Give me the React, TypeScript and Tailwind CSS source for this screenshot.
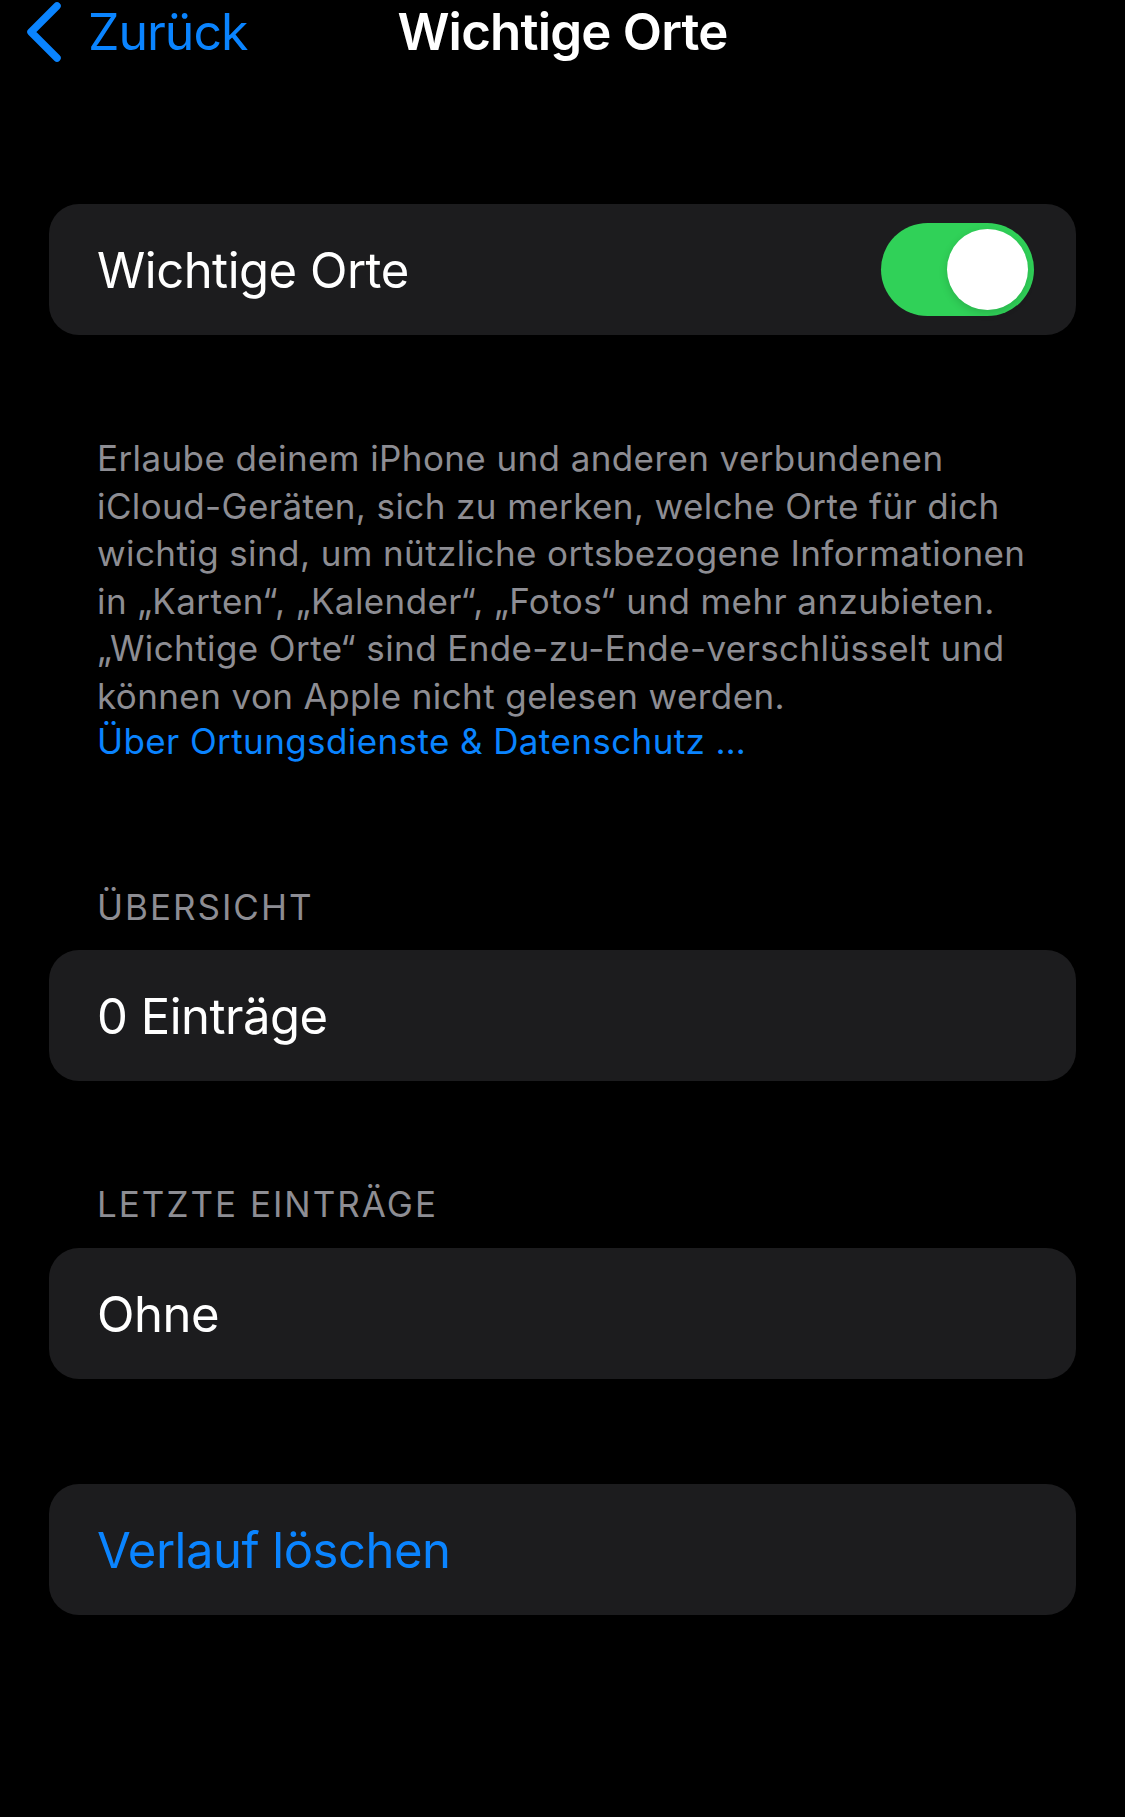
import { useState } from "react";

const font = { fontFamily: "Inter, 'Noto Sans', sans-serif" };

function Toggle({ on, onChange }: { on: boolean; onChange: (v: boolean) => void }) {
  return (
    <button
      onClick={() => onChange(!on)}
      className={`relative flex h-[93px] w-[153px] shrink-0 items-center rounded-full px-[6px] ${on ? "justify-end bg-[#30d158]" : "justify-start bg-[#39393d]"}`}
      aria-label="Wichtige Orte"
    >
      <span className="block h-[81px] w-[81px] rounded-full bg-white shadow-[0_3px_8px_rgba(0,0,0,0.15)]" />
    </button>
  );
}

function Card({ children }: { children: React.ReactNode }) {
  return (
    <div className="mx-[49px] flex h-[131px] items-center justify-between rounded-[30px] bg-[#1c1c1e] pl-[48px] pr-[42px]">
      {children}
    </div>
  );
}

export default function App() {
  const [on, setOn] = useState(true);

  const lines = [
    "Erlaube deinem iPhone und anderen verbundenen",
    "iCloud-Geräten, sich zu merken, welche Orte für dich",
    "wichtig sind, um nützliche ortsbezogene Informationen",
    "in „Karten“, „Kalender“, „Fotos“ und mehr anzubieten.",
    "„Wichtige Orte“ sind Ende-zu-Ende-verschlüsselt und",
    "können von Apple nicht gelesen werden.",
  ];

  return (
    <div className="min-h-[1817px] w-full bg-black text-white" style={font}>
      {/* Nav bar */}
      <div className="grid h-[63px] grid-cols-[1fr_auto_1fr] items-center">
        <button className="flex items-center pl-[25px] text-[#0a84ff]">
          <svg width="38" height="60" viewBox="0 0 38 60" fill="none">
            <path d="M32 4 L6 30 L32 56" stroke="currentColor" strokeWidth="7.5" strokeLinecap="round" strokeLinejoin="round" />
          </svg>
          <span className="ml-[25px] text-[50px] leading-none tracking-[-1px]">Zurück</span>
        </button>
        <div className="text-[51px] font-semibold leading-none tracking-[-0.8px]">Wichtige Orte</div>
        <div />
      </div>

      <div className="mt-[141px]">
        <Card>
          <span className="pt-[3px] text-[49px] tracking-[-0.5px]">Wichtige Orte</span>
          <Toggle on={on} onChange={setOn} />
        </Card>
      </div>

      {/* Footer text */}
      <div className="mt-[100px] px-[97px] text-[35px] tracking-[0.4px] text-[#8d8d93]">
        {lines.map((l) => (
          <div key={l} className="whitespace-nowrap leading-[47.6px]">
            {l}
          </div>
        ))}
        <div className="whitespace-nowrap leading-[41px] text-[#0a84ff]">Über Ortungsdienste &amp; Datenschutz …</div>
      </div>

      <div className="mt-[119px] px-[97px] text-[35px] uppercase tracking-[2px] text-[#8d8d93]">Übersicht</div>
      <div className="mt-[17px]">
        <Card>
          <span className="pt-[3px] text-[49px] tracking-[-0.5px]">0 Einträge</span>
        </Card>
      </div>

      <div className="mt-[97px] px-[97px] text-[35px] uppercase tracking-[2px] text-[#8d8d93]">Letzte Einträge</div>
      <div className="mt-[17px]">
        <Card>
          <span className="pt-[3px] text-[49px] tracking-[-0.5px]">Ohne</span>
        </Card>
      </div>

      <div className="mt-[105px]">
        <Card>
          <span className="pt-[3px] text-[49px] tracking-[-0.5px] text-[#0a84ff]">Verlauf löschen</span>
        </Card>
      </div>
    </div>
  );
}
